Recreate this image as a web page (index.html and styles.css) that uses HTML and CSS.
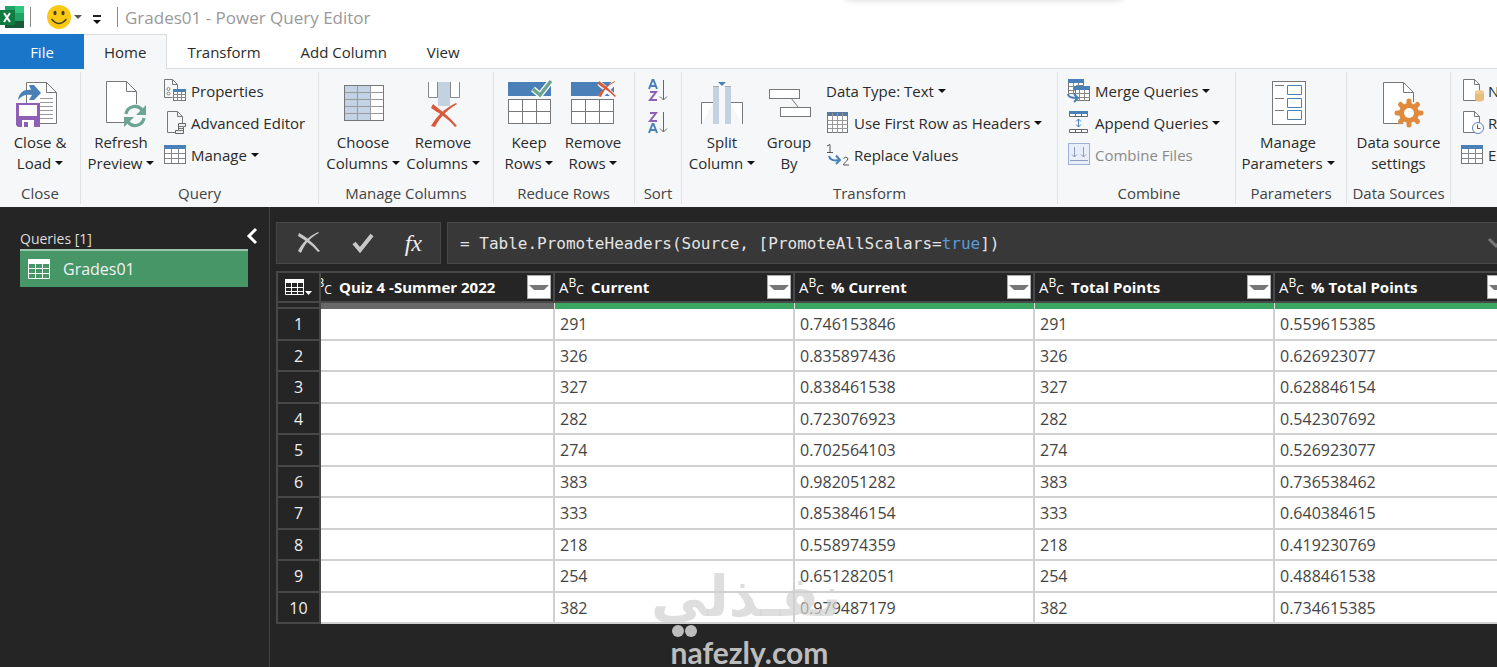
FILE: index.html
```html
<!DOCTYPE html>
<html lang="en">
<head>
    <meta charset="UTF-8">
    <meta name="viewport" content="width=device-width, initial-scale=1.0">
    <title>Grades01 - Power Query Editor</title>
    <link rel="stylesheet" href="styles.css">
</head>
<body>
    <!-- Title bar -->
    <header class="titlebar">
        <svg class="excel" viewBox="0 0 24 22">
            <rect x="5" width="19" height="22" fill="#21a366"/>
            <rect x="15" width="9" height="7" fill="#33c481"/>
            <rect x="5" y="7" width="10" height="8" fill="#107c41"/>
            <rect x="5" y="15" width="19" height="7" fill="#185c37"/>
            <rect y="4" width="15" height="15" fill="#107c41"/>
            <path d="M4 7l6 9M10 7l-6 9" stroke="#fff" stroke-width="2"/>
        </svg>
        <span class="bar"></span>
        <button class="smile" aria-label="Send feedback">
            <svg width="24" height="24" viewBox="0 0 24 24">
                <circle cx="12" cy="12" r="12" fill="#fbc913"/>
                <ellipse cx="8" cy="8" rx="1.6" ry="2.2" fill="#4a4030"/>
                <ellipse cx="16" cy="8" rx="1.6" ry="2.2" fill="#4a4030"/>
                <path d="M4.500 14q7.500 9 15 0" fill="none" stroke="#4a4030" stroke-width="1.500"/>
            </svg>
            <i class="caret soft"></i>
        </button>
        <button class="customize" aria-label="Customize Quick Access Toolbar"><i class="caret"></i></button>
        <span class="bar"></span>
        <h1>Grades01 - Power Query Editor</h1>
        <span class="notch"></span>
    </header>

    <nav class="tabs">
        <button class="tab file">File</button>
        <button class="tab active">Home</button>
        <button class="tab">Transform</button>
        <button class="tab">Add Column</button>
        <button class="tab">View</button>
    </nav>

    <!-- Ribbon -->
    <div class="ribbon">
        <section class="group close">
            <div class="tools">
                <button class="big">
                    <svg viewBox="0 0 48 50">
                        <path d="M10.500 3.500h20l10 10v31h-30z" fill="#fff" stroke="#777"/>
                        <path d="M30.500 3.500v10h10" fill="none" stroke="#777"/>
                        <path d="M24 19.500h13M24 23.500h13M24 27.500h13M24 31.500h13M24 35.500h13M24 39.500h13" stroke="#999"/>
                        <path d="M2 21C3 13 9 10 15 11L13 6h5l7 8-7 7h-5l3-5c-6-1-10 0-14 5z" fill="#4a80b8"/>
                        <path d="M0 24h24v24H2l-2-2z" fill="#8f5fb5"/>
                        <path d="M3 26h18v11H3zM6 41h12v7H6z" fill="#fff"/>
                        <path d="M8 43h4v5H8z" fill="#8f5fb5"/>
                    </svg>
                    <span>Close &amp;</span>
                    <span>Load <i class="caret"></i></span>
                </button>
            </div>
            <h2>Close</h2>
        </section>

        <section class="group query">
            <div class="tools">
                <button class="big">
                    <svg viewBox="0 0 48 50">
                        <path d="M9.500 2.500h20l10 10v31h-30z" fill="#fff" stroke="#777"/>
                        <path d="M29.500 2.500v10h10" fill="none" stroke="#777"/>
                        <circle cx="38" cy="37" r="12" fill="#f5f7f8"/>
                        <path d="M29 35a9 9 0 0 1 16-4M47 39a9 9 0 0 1-16 4" fill="none" stroke="#6da592" stroke-width="3.200"/>
                        <path d="M49 26v10H39zM27 48V38h10z" fill="#6da592"/>
                    </svg>
                    <span>Refresh</span>
                    <span>Preview <i class="caret"></i></span>
                </button>
                <div class="list">
                    <button class="small">
                        <svg viewBox="0 0 24 24">
                            <path d="M1.500.500h8l5 5v5M1.500.500v18h8M9.500.500v5h5" fill="none" stroke="#777"/>
                            <circle cx="5.500" cy="10" r="1.500" fill="none" stroke="#888"/><circle cx="5.500" cy="14.500" r="1.500" fill="none" stroke="#888"/>
                            <rect x="10.500" y="10.500" width="12" height="11" fill="#fff" stroke="#777"/>
                            <path d="M10 10h13v3H10z" fill="#4a80b8"/>
                            <path d="M10 15.500h13M10 18.500h13M14.500 13v9M18.500 13v9" stroke="#888"/>
                        </svg>
                        Properties
                    </button>
                    <button class="small">
                        <svg viewBox="0 0 24 24">
                            <path d="M4.500.500h10l5 5v7M4.500.500v21h9M14.500.500v5h5" fill="none" stroke="#777"/>
                            <path d="M15.500 12.500h7v3h-2v7h-8v-3h3z" fill="#eee" stroke="#666"/>
                            <path d="M16 15.500h4M16 17.500h4M16 19.500h4" stroke="#777"/>
                        </svg>
                        Advanced Editor
                    </button>
                    <button class="small">
                        <svg viewBox="0 0 24 24">
                            <rect x="1.500" y="2.500" width="21" height="18" fill="#fff" stroke="#777"/>
                            <path d="M1 2h22v4H1z" fill="#4a80b8"/>
                            <path d="M2 10.500h20M2 15.500h20M8.500 6v14M15.500 6v14" stroke="#888"/>
                        </svg>
                        Manage <i class="caret"></i>
                    </button>
                </div>
            </div>
            <h2>Query</h2>
        </section>

        <section class="group columns">
            <div class="tools">
                <button class="big">
                    <svg viewBox="0 0 48 50">
                        <rect x="5.500" y="6.500" width="39" height="35" fill="#fff"/>
                        <path d="M5 6h27v36H5z" fill="#c3d2e4"/>
                        <path d="M5 13.500h40M5 20.500h40M5 27.500h40M5 34.500h40M18.500 6v36M31.500 6v36" stroke="#999" />
                        <rect x="5.500" y="6.500" width="39" height="35" fill="none" stroke="#777"/>
                    </svg>
                    <span>Choose</span>
                    <span>Columns <i class="caret"></i></span>
                </button>
                <button class="big">
                    <svg viewBox="0 0 48 50">
                        <path d="M9.500 3v15.500h9V3M31.500 3v15.500h9V3" fill="#fff" stroke="#888"/>
                        <path d="M19 3h12v24H19z" fill="#c3d2e0"/>
                        <path d="M14 25c6 5 16 12 24 22l-2 1C28 38 19 34 12 29zM38 25C28 31 21 38 16 48l-4-1c5-9 14-18 25-23z" fill="#d9593b"/>
                    </svg>
                    <span>Remove</span>
                    <span>Columns <i class="caret"></i></span>
                </button>
            </div>
            <h2>Manage Columns</h2>
        </section>

        <section class="group rows">
            <div class="tools">
                <button class="big">
                    <svg viewBox="0 0 48 50">
                        <path d="M3 3h43v14H3z" fill="#4a80b8"/>
                        <rect x="3.500" y="20.500" width="42" height="24" fill="#fff" stroke="#777"/>
                        <path d="M3 32.500h43M17.500 20v25M31.500 20v25" stroke="#777"/>
                        <path d="M28 10l7 6L46 2" fill="none" stroke="#fff" stroke-width="6"/>
                        <path d="M28 10l7 6L46 2" fill="none" stroke="#6da592" stroke-width="3.500"/>
                    </svg>
                    <span>Keep</span>
                    <span>Rows <i class="caret"></i></span>
                </button>
                <button class="big">
                    <svg viewBox="0 0 48 50">
                        <path d="M2 3h43v14H2z" fill="#4a80b8"/>
                        <rect x="2.500" y="20.500" width="42" height="24" fill="#fff" stroke="#777"/>
                        <path d="M2 32.500h43M16.500 20v25M30.500 20v25" stroke="#777"/>
                        <path d="M30 4l16 14M46 3L31 18" stroke="#f5f7f8" stroke-width="5"/>
                        <path d="M30 2c6 4 11 9 17 15l-1 1C40 12 34 9 29 5zM46 3C39 6 35 11 32 18l-3-1c3-6 9-11 17-15z" fill="#d9593b"/>
                    </svg>
                    <span>Remove</span>
                    <span>Rows <i class="caret"></i></span>
                </button>
            </div>
            <h2>Reduce Rows</h2>
        </section>

        <section class="group sort">
            <div class="tools">
                <button class="sorter" aria-label="Sort ascending">
                    <svg viewBox="0 0 20 24">
                        <path d="M1 10L4.500 1h1L9 10M2.500 7h5" fill="none" stroke="#4a80b8" stroke-width="2"/>
                        <path d="M2 13h6l-6 8h7" fill="none" stroke="#8f5fb5" stroke-width="2"/>
                        <path d="M15.500 1v20M12 17.500l3.500 3.500 3.500-3.500" fill="none" stroke="#666"/>
                    </svg>
                </button>
                <button class="sorter" aria-label="Sort descending">
                    <svg viewBox="0 0 20 24">
                        <path d="M2 2h6l-6 8h7" fill="none" stroke="#8f5fb5" stroke-width="2"/>
                        <path d="M1 22L4.500 13h1L9 22M2.500 19h5" fill="none" stroke="#4a80b8" stroke-width="2"/>
                        <path d="M15.500 1v20M12 17.500l3.500 3.500 3.500-3.500" fill="none" stroke="#666"/>
                    </svg>
                </button>
            </div>
            <h2>Sort</h2>
        </section>

        <section class="group transform">
            <div class="tools">
                <button class="big">
                    <svg viewBox="0 0 48 50">
                        <path d="M3.500 45V23.500h12M32 23.500h12.500V45" fill="#fff" stroke="#777"/>
                        <path d="M15 7h6v38h-6zM27 7h6v38h-6z" fill="#c3d2e0"/>
                        <path d="M15 7.500h6M27 7.500h6" stroke="#aaa"/>
                        <path d="M20 3h8l-4 4z" fill="#4a80b8"/>
                    </svg>
                    <span>Split</span>
                    <span>Column <i class="caret"></i></span>
                </button>
                <button class="big by">
                    <svg viewBox="0 0 48 50">
                        <path d="M26 19l7 9" stroke="#777"/>
                        <rect x="4.500" y="10.500" width="30" height="9" fill="#fff" stroke="#777"/>
                        <rect x="15.500" y="28.500" width="30" height="9" fill="#fff" stroke="#777"/>
                    </svg>
                    <span>Group</span>
                    <span>By</span>
                </button>
                <div class="list">
                    <button class="small">Data Type: Text <i class="caret"></i></button>
                    <button class="small">
                        <svg viewBox="0 0 24 24">
                            <rect x="1.500" y="1.500" width="20" height="20" fill="#fff" stroke="#777"/>
                            <path d="M1 1h21v4H1z" fill="#55799f"/>
                            <path d="M2 9.500h20M2 13.500h20M2 17.500h20M6.500 2v20M11.500 2v20M16.500 2v20" stroke="#999"/>
                        </svg>
                        Use First Row as Headers <i class="caret"></i>
                    </button>
                    <button class="small">
                        <svg viewBox="0 0 24 24">
                            <path d="M1 3l3-1.500v8M1 9.500h6M17.500 15.500q2.500-3 4.500 0c0 2-4 4-4.500 6.500h5.500" fill="none" stroke="#555"/>
                            <path d="M3 13c1 4 5 5 10 4M10 12.500l4 4.500-4 4" fill="none" stroke="#4a80b8" stroke-width="2"/>
                        </svg>
                        Replace Values
                    </button>
                </div>
            </div>
            <h2>Transform</h2>
        </section>

        <section class="group combine">
            <div class="tools">
                <div class="list">
                    <button class="small">
                        <svg viewBox="0 0 24 24">
                            <path d="M1.500 1.500h15v5h-7v8h-8z" fill="#fff" stroke="#777"/>
                            <path d="M1 0h16v4H1z" fill="#4a80b8"/>
                            <path d="M2 7.500h6M2 11.500h6M6.500 4v10M11.500 4v3" stroke="#888"/>
                            <rect x="8.500" y="8.500" width="14" height="13" fill="#fff" stroke="#777"/>
                            <path d="M7 7h16v4H7z" fill="#4a80b8"/>
                            <path d="M8 14.500h14M8 18.500h14M12.500 11v11M17.500 11v11" stroke="#888"/>
                            <path d="M1 15c0 3 3 4 9 4M7 15l4 4-4 4" fill="none" stroke="#4a80b8" stroke-width="2"/>
                        </svg>
                        Merge Queries <i class="caret"></i>
                    </button>
                    <button class="small">
                        <svg viewBox="0 0 24 24">
                            <path d="M2.500 1.500h18v4h-18zM2.500 18.500h18v3h-18zM8.500 3v3M14.500 3v3M8.500 18v4M14.500 18v4" fill="#fff" stroke="#666"/>
                            <path d="M2 0h19v3H2z" fill="#4a80b8"/>
                            <path d="M11.500 8v8M9 10.500L11.500 8l2.500 2.500M9 13.500l2.500 2.500 2.500-2.500" fill="none" stroke="#4a80b8"/>
                        </svg>
                        Append Queries <i class="caret"></i>
                    </button>
                    <button class="small" disabled>
                        <svg viewBox="0 0 24 24">
                            <rect x="1.500" y=".500" width="21" height="21" fill="#e9effa" stroke="#9fb0d5"/>
                            <path d="M3 17.500h18M7.500 4v10M5 11.500L7.500 14l2.500-2.500M16.500 4v10M14 11.500l2.500 2.500 2.500-2.500" fill="none" stroke="#8d9cc2"/>
                        </svg>
                        Combine Files
                    </button>
                </div>
            </div>
            <h2>Combine</h2>
        </section>

        <section class="group params">
            <div class="tools">
                <button class="big">
                    <svg viewBox="0 0 48 50">
                        <rect x="8.500" y="2.500" width="33" height="43" fill="#fff" stroke="#777"/>
                        <path d="M11 6.500h9M11 19.500h9M11 31.500h9" stroke="#777"/>
                        <path d="M23.500 6.500h14v9h-14zM23.500 19.500h14v9h-14zM23.500 31.500h14v9h-14z" fill="none" stroke="#4a80b8"/>
                    </svg>
                    <span>Manage</span>
                    <span>Parameters <i class="caret"></i></span>
                </button>
            </div>
            <h2>Parameters</h2>
        </section>

        <section class="group sources">
            <div class="tools">
                <button class="big">
                    <svg viewBox="0 0 48 50">
                        <path d="M8.500 3.500h20l10 10v31h-30z" fill="#fff" stroke="#777"/>
                        <path d="M28.500 3.500v10h10" fill="none" stroke="#777"/>
                        <circle cx="34" cy="34" r="12" fill="#f5f7f8"/>
                        <path d="M34 22v24M22 34h24M25.500 25.500l17 17M42.500 25.500l-17 17" stroke="#e08a3e" stroke-width="5" stroke-linecap="round"/>
                        <circle cx="34" cy="34" r="10" fill="#e08a3e"/>
                        <circle cx="34" cy="34" r="5" fill="#fff"/>
                    </svg>
                    <span>Data source</span>
                    <span>settings</span>
                </button>
            </div>
            <h2>Data Sources</h2>
        </section>

        <section class="group new">
            <div class="tools">
                <div class="list">
                    <button class="small">
                        <svg viewBox="0 0 24 24">
                            <path d="M3.500.500h11l5 5v16h-16z" fill="#fff" stroke="#777"/>
                            <path d="M14.500.500v5h5" fill="none" stroke="#777"/>
                            <path d="M15 13v8q4.500 3 9 0v-8z" fill="#e8bd7c"/>
                            <ellipse cx="19.500" cy="13" rx="4.500" ry="2" fill="#f0cc95"/>
                        </svg>
                        New Source <i class="caret"></i>
                    </button>
                    <button class="small">
                        <svg viewBox="0 0 24 24">
                            <path d="M3.500.500h11l5 5v16h-16z" fill="#fff" stroke="#777"/>
                            <path d="M14.500.500v5h5" fill="none" stroke="#777"/>
                            <circle cx="18" cy="17" r="5.500" fill="#fff" stroke="#5b7fc0"/>
                            <path d="M17.500 13.500v4h3" fill="none" stroke="#555"/>
                        </svg>
                        Recent Sources <i class="caret"></i>
                    </button>
                    <button class="small">
                        <svg viewBox="0 0 24 24">
                            <rect x="1.500" y="2.500" width="21" height="18" fill="#fff" stroke="#777"/>
                            <path d="M1 2h22v4H1z" fill="#4a80b8"/>
                            <path d="M2 10.500h20M2 15.500h20M8.500 6v14M15.500 6v14" stroke="#888"/>
                        </svg>
                        Enter Data
                    </button>
                </div>
            </div>
            <h2>New Query</h2>
        </section>
    </div>

    <div class="workspace">
        <!-- Queries pane -->
        <aside class="queries">
            <div class="queries-head">
                <span>Queries [1]</span>
                <button class="collapse" aria-label="Collapse pane">
                    <svg width="12" height="18" viewBox="0 0 12 18"><path d="M10 2L3 9l7 7" fill="none" stroke="#fff" stroke-width="3"/></svg>
                </button>
            </div>
            <button class="query-item">
                <svg width="22" height="20" viewBox="0 0 22 20">
                    <path d="M0 0h22v5H0z" fill="#fff"/>
                    <path d="M.500 1v18.500h21V1M0 9.500h22M0 14.500h22M7.500 5v15M14.500 5v15" fill="none" stroke="#fff"/>
                </svg>
                Grades01
            </button>
        </aside>

        <main class="preview">
            <div class="formula">
                <div class="formula-tools">
                    <button aria-label="Cancel">
                        <svg width="24" height="22" viewBox="0 0 24 22"><path d="M2 1c8 4 15 11 21 18l-2 1C15 13 8 8 1 4zM22 1C14 5 8 11 4 21l-3-2C5 11 12 4 21 0z" fill="#c8c8c8"/></svg>
                    </button>
                    <button aria-label="Commit">
                        <svg width="22" height="20" viewBox="0 0 22 20"><path d="M2 10l6 7L20 2" fill="none" stroke="#c8c8c8" stroke-width="4"/></svg>
                    </button>
                    <button class="fx" aria-label="Insert step">fx</button>
                </div>
                <div class="formula-box">
                    <div class="formula-text" role="textbox" aria-label="Formula" contenteditable="true" spellcheck="false">= Table.PromoteHeaders(Source, [PromoteAllScalars=<b>true</b>])</div>
                    <button class="expand" aria-label="Expand formula bar">
                        <svg width="16" height="12" viewBox="0 0 16 12"><path d="M1 2l7 7 7-7" fill="none" stroke="#777" stroke-width="3"/></svg>
                    </button>
                </div>
            </div>

            <div class="scroller">
                <table>
                    <colgroup>
                        <col class="col-index"><col class="col-first"><col><col><col><col>
                    </colgroup>
                    <thead>
                        <tr>
                            <th class="corner">
                                <button aria-label="Table menu">
                                    <svg width="28" height="16" viewBox="0 0 28 16">
                                        <path d="M0 0h19v4H0z" fill="#fff"/>
                                        <path d="M.500 1v14.500h18V1M0 8.500h19M0 12.500h19M6.500 4v12M12.500 4v12" fill="none" stroke="#fff"/>
                                        <path d="M20 12h7l-3.500 4z" fill="#fff"/>
                                    </svg>
                                </button>
                            </th>
                            <th class="scrolled"><div class="head"><span class="type">A<sup>B</sup><sub>C</sub></span>Quiz 4 -Summer 2022<button class="filter" aria-label="Filter"></button></div></th>
                            <th><div class="head"><span class="type">A<sup>B</sup><sub>C</sub></span>Current<button class="filter" aria-label="Filter"></button></div></th>
                            <th><div class="head"><span class="type">A<sup>B</sup><sub>C</sub></span>% Current<button class="filter" aria-label="Filter"></button></div></th>
                            <th><div class="head"><span class="type">A<sup>B</sup><sub>C</sub></span>Total Points<button class="filter" aria-label="Filter"></button></div></th>
                            <th><div class="head"><span class="type">A<sup>B</sup><sub>C</sub></span>% Total Points<button class="filter" aria-label="Filter"></button></div></th>
                        </tr>
                        <!-- Column quality strip -->
                        <tr class="quality"><td></td><td class="empty"></td><td></td><td></td><td></td><td></td></tr>
                    </thead>
                    <tbody>
                        <tr><th>1</th><td></td><td>291</td><td>0.746153846</td><td>291</td><td>0.559615385</td></tr>
                        <tr><th>2</th><td></td><td>326</td><td>0.835897436</td><td>326</td><td>0.626923077</td></tr>
                        <tr><th>3</th><td></td><td>327</td><td>0.838461538</td><td>327</td><td>0.628846154</td></tr>
                        <tr><th>4</th><td></td><td>282</td><td>0.723076923</td><td>282</td><td>0.542307692</td></tr>
                        <tr><th>5</th><td></td><td>274</td><td>0.702564103</td><td>274</td><td>0.526923077</td></tr>
                        <tr><th>6</th><td></td><td>383</td><td>0.982051282</td><td>383</td><td>0.736538462</td></tr>
                        <tr><th>7</th><td></td><td>333</td><td>0.853846154</td><td>333</td><td>0.640384615</td></tr>
                        <tr><th>8</th><td></td><td>218</td><td>0.558974359</td><td>218</td><td>0.419230769</td></tr>
                        <tr><th>9</th><td></td><td>254</td><td>0.651282051</td><td>254</td><td>0.488461538</td></tr>
                        <tr><th>10</th><td></td><td>382</td><td>0.979487179</td><td>382</td><td>0.734615385</td></tr>
                    </tbody>
                </table>
            </div>
        </main>
    </div>

    <div class="watermark">
        <div class="wm-ar" lang="ar" dir="rtl">نفـذلى</div>
        <div class="wm-dots"><i></i><i></i></div>
        <div class="wm-en">nafezly.com</div>
    </div>
</body>
</html>
```
FILE: styles.css
```css
* {
    box-sizing: border-box;
}

html, body {
    height: 100%;
    margin: 0;
}

body {
    display: flex;
    flex-direction: column;
    position: relative;
    overflow: hidden;
    background-color: #252525;
    color: #2b2b2b;
    font-family: "Open Sans", "Noto Sans", sans-serif;
    font-size: 15px;
}

button {
    padding: 0;
    border: none;
    background: none;
    color: inherit;
    font: inherit;
    cursor: pointer;
}

h1, h2 {
    margin: 0;
    font-weight: normal;
}

svg {
    display: block;
    flex: none;
    overflow: visible;
}

.caret {
    display: inline-block;
    border: 4px solid transparent;
    border-top-color: #111;
    border-bottom: none;
    vertical-align: 4px;
}

.caret.soft {
    border-top-color: #555;
}

/* Title bar */
.titlebar {
    display: flex;
    align-items: center;
    flex: none;
    height: 34px;
    background-color: #fff;
    position: relative;
}

.excel {
    width: 24px;
    height: 22px;
    margin-right: 6px;
}

.bar {
    width: 1px;
    height: 20px;
    background-color: #888;
}

.smile {
    display: flex;
    align-items: center;
    gap: 3px;
    margin-left: 16px;
}

.customize {
    border-top: 2px solid #222;
    padding-top: 3px;
    margin: 4px 16px 0 11px;
    line-height: 4px;
    display: flex;
}

.titlebar h1 {
    margin-left: 7px;
    font-size: 17px;
    color: #999;
}

.notch {
    position: absolute;
    top: -4px;
    left: 846px;
    width: 276px;
    height: 4px;
    box-shadow: 0 0 6px rgba(0, 0, 0, 0.2);
}

/* Tabs */
.tabs {
    display: flex;
    flex: none;
    height: 35px;
    background-color: #fff;
    border-bottom: 1px solid #dadbdc;
}

.tab {
    height: 35px;
    padding: 0 20px;
}

.tab.file {
    width: 84px;
    background-color: #1976c8;
    color: #fff;
}

.tab.active {
    border: 1px solid #dadbdc;
    border-bottom: none;
    border-left: none;
    background-color: #f5f7f8;
}

/* Ribbon */
.ribbon {
    display: flex;
    flex: none;
    height: 138px;
    padding: 3px 0;
    background-color: #f5f7f8;
    overflow: hidden;
    white-space: nowrap;
}

.group {
    display: flex;
    flex: none;
    flex-direction: column;
    justify-content: space-between;
    border-right: 1px solid #e1e3e5;
}

.group h2 {
    font-size: 15px;
    line-height: 22px;
    color: #444;
    text-align: center;
}

.tools {
    display: flex;
    padding-top: 3px;
}

.close { width: 81px; }
.query { width: 238px; }
.columns { width: 175px; padding-left: 4px; }
.rows { width: 141px; padding-left: 3px; }
.sort { width: 47px; }
.transform { width: 376px; }
.combine { width: 178px; padding-left: 9px; }
.params { width: 111px; }
.sources { width: 104px; }
.new { width: 162px; padding-left: 9px; }

.columns h2, .rows h2, .combine h2 {
    margin-left: -4px;
}

.big {
    display: flex;
    flex-direction: column;
    align-items: center;
    width: 80px;
    padding-top: 4px;
    line-height: 21px;
}

.big svg {
    width: 48px;
    height: 50px;
    margin-bottom: 3px;
}

.rows .big { width: 64px; }
.params .big, .sources .big { width: 104px; }
.transform .by { width: 54px; }

.list {
    display: flex;
    flex-direction: column;
    align-items: flex-start;
    margin-left: 2px;
}

.transform .list { margin-left: 10px; }
.combine .list, .new .list { margin-left: 0; }

.small {
    display: flex;
    align-items: center;
    gap: 4px;
    height: 32px;
}

.small svg {
    width: 24px;
    height: 24px;
}

.small:disabled {
    color: #8a8a8a;
}

.sort .tools {
    flex-direction: column;
    align-items: center;
    padding-top: 7px;
    gap: 8px;
}

.sorter svg {
    width: 20px;
    height: 24px;
}

/* Workspace */
.workspace {
    display: flex;
    flex: 1;
    min-height: 0;
}

.queries {
    flex: none;
    width: 270px;
    padding: 20px 21px 0 20px;
    border-right: 1px solid #444;
    color: #ddd;
}

.queries-head {
    display: flex;
    justify-content: space-between;
    height: 22px;
    font-size: 14px;
    line-height: 24px;
    margin-right: -10px;
}

.collapse {
    height: 18px;
}

.query-item {
    display: flex;
    align-items: center;
    gap: 13px;
    width: 100%;
    height: 38px;
    padding-left: 8px;
    border-top: 2px solid #9cc4ad;
    background-color: #479668;
    color: #f2f2f2;
    font-size: 16px;
}

.preview {
    flex: 1;
    min-width: 0;
    padding: 15px 0 0 6px;
}

/* Formula bar */
.formula {
    display: flex;
    gap: 6px;
    height: 42px;
    margin-bottom: 7px;
    overflow: hidden;
}

.formula-tools, .formula-box {
    display: flex;
    align-items: center;
    border: 1px solid #484848;
    background-color: #383838;
}

.formula-tools {
    flex: none;
    justify-content: space-between;
    width: 165px;
    padding: 0 18px 0 20px;
}

.fx {
    color: #eee;
    font: italic 24px "Liberation Serif", serif;
}

.formula-box {
    flex: 1;
    justify-content: space-between;
    margin-right: -8px;
    padding-left: 12px;
}

.formula-text {
    flex: 1;
    outline: none;
    color: #e4e4e4;
    font: 16px "DejaVu Sans Mono", monospace;
    white-space: pre;
}

.formula-text b {
    color: #5b9bd5;
    font-weight: normal;
}

/* Data grid */
.scroller {
    overflow: hidden;
}

table {
    width: 1239px;
    table-layout: fixed;
    border-collapse: separate;
    border-spacing: 0;
    border-left: 2px solid #484848;
}

col { width: 240px; }
.col-index { width: 43px; }
.col-first { width: 234px; }

th, td {
    padding: 0;
}

thead th {
    height: 32px;
    border: 2px solid #484848;
    border-left: none;
    border-width: 2px 2px 2px 0;
    background-color: #252525;
    color: #fff;
    font-size: 15px;
    overflow: hidden;
}

.corner button {
    display: flex;
    margin: 0 auto;
}

.head {
    display: flex;
    align-items: center;
    height: 28px;
    padding: 0 2px 0 4px;
    white-space: nowrap;
}

/* First column is partly scrolled under the row numbers */
.scrolled .head {
    margin-left: -18px;
}

.type {
    display: flex;
    width: 32px;
    font-size: 15px;
    font-weight: normal;
    line-height: 20px;
}

.type sup, .type sub {
    font-size: 12px;
    line-height: 12px;
}

.type sub {
    padding-top: 7px;
}

.filter {
    width: 24px;
    height: 24px;
    margin-left: auto;
    border: 1px solid #aaa;
    background-color: #fff;
}

.filter::before {
    content: "";
    display: block;
    width: 10px;
    margin: 0 auto;
    border: 5px solid transparent;
    border-top-color: #777;
    border-bottom: none;
}

.quality td {
    height: 6px;
    border-right: 1px solid #ddd;
    background-color: #3ba562;
}

.quality td:first-child {
    border-right: 2px solid #484848;
    border-bottom: 2px solid #484848;
    background-color: #252525;
}

.quality .empty {
    background-color: #696969;
}

tbody tr { height: 32px; }
tbody tr:nth-child(even) { height: 31px; }

tbody th {
    border-right: 2px solid #484848;
    border-bottom: 2px solid #484848;
    color: #f0f0f0;
    font-size: 16px;
    font-weight: normal;
}

tbody td {
    padding-left: 5px;
    border-right: 2px solid #d0d0d0;
    border-bottom: 2px solid #d0d0d0;
    background-color: #fff;
    color: #444;
    font-size: 16px;
    line-height: 20px;
}

/* Watermark */
.watermark {
    position: absolute;
    left: 50%;
    bottom: 0;
    width: 184px;
    margin-left: -91px;
    pointer-events: none;
    text-align: center;
}

.wm-ar {
    color: rgba(208, 208, 208, 0.7);
    font: bold 56px/56px "DejaVu Sans", sans-serif;
}

.wm-dots {
    display: flex;
    gap: 1px;
    padding-left: 14px;
}

.wm-dots i {
    width: 12px;
    height: 12px;
    border-radius: 50%;
    background-color: #bdbdbd;
}

.wm-en {
    color: #bdbdbd;
    font: bold 30px/30px Lato, sans-serif;
}
```
